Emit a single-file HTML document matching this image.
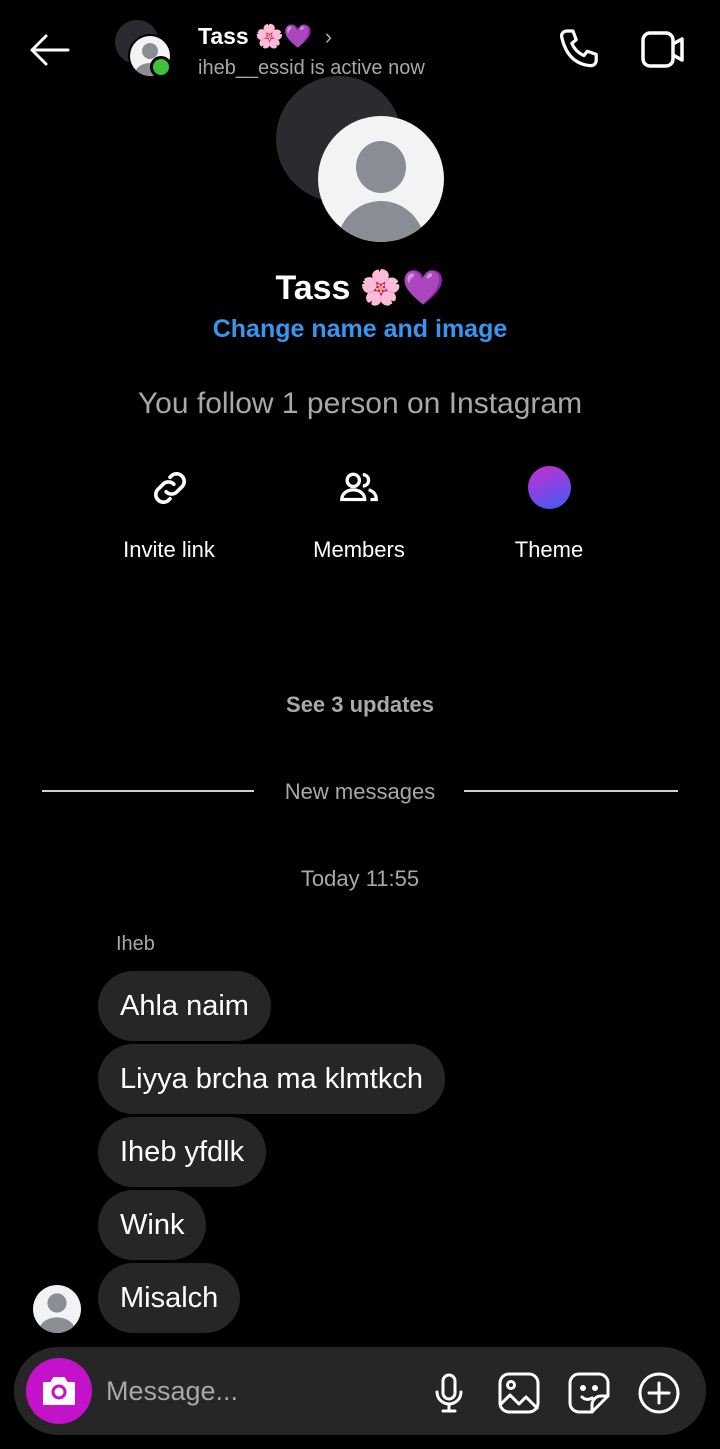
<!DOCTYPE html>
<html><head><meta charset="utf-8"><style>
body{margin:0;width:720px;height:1449px;background:#000;position:relative;overflow:hidden;font-family:"Liberation Sans","Noto Sans CJK JP",sans-serif;color:#fff}
.a{position:absolute}
.c{position:absolute;left:0;width:720px;text-align:center}
.b{position:absolute;left:98px;height:70px;background:#262626;border-radius:35px;font-size:29px;line-height:70px;padding:0 22px;box-sizing:border-box}
</style></head><body>
<svg class="a" style="left:28px;top:32px" width="44" height="36" viewBox="0 0 44 36"><path d="M40 18H4M18 4L4 18l14 14" stroke="#fff" stroke-width="3" fill="none" stroke-linecap="round" stroke-linejoin="round"/></svg>
<div class="a" style="left:115px;top:20px;width:44px;height:44px;border-radius:50%;background:#2a2b2e"></div>
<div class="a" style="left:128px;top:34px;width:44px;height:44px;border-radius:50%;background:#000"></div>
<svg class="a" style="left:130px;top:36px" width="40" height="40" viewBox="0 0 40 40"><defs><clipPath id="s"><circle cx="20" cy="20" r="20"/></clipPath></defs><circle cx="20" cy="20" r="20" fill="#f2f3f5"/><g clip-path="url(#s)" fill="#8a8d94"><circle cx="20" cy="15" r="8"/><ellipse cx="20" cy="38" rx="15" ry="11"/></g></svg>
<div class="a" style="left:150px;top:56px;width:22px;height:22px;border-radius:50%;background:#3ec23e;border:3px solid #000;box-sizing:border-box"></div>
<div class="a" style="left:198px;top:23px;font-size:23px;font-weight:bold">Tass 🌸💜 <span style="font-weight:normal;color:#aaa;font-size:22px;margin-left:6px">›</span></div>
<div class="a" style="left:198px;top:57px;font-size:20px;color:#a8a8a8">iheb__essid is active now</div>
<svg class="a" style="left:556px;top:26px" width="48" height="48" viewBox="0 0 24 24"><path d="M5.5 2.5h3l1.6 4.4-2.2 1.8c1.2 2.8 3.3 4.9 6 6.1l1.8-2.2 4.4 1.6v3c0 1.6-1.3 2.8-2.9 2.6C9.6 19.2 4.8 14.4 2.8 5.3 2.6 3.8 3.9 2.5 5.5 2.5z" stroke="#fff" stroke-width="1.6" fill="none" stroke-linejoin="round"/></svg>
<svg class="a" style="left:640px;top:30px" width="48" height="40" viewBox="0 0 48 40"><rect x="3" y="3" width="30" height="33" rx="7" stroke="#fff" stroke-width="3.5" fill="none"/><path d="M33 14l9-5v21l-9-5" stroke="#fff" stroke-width="3.5" fill="none" stroke-linejoin="round"/></svg>
<div class="a" style="left:276px;top:76px;width:126px;height:126px;border-radius:50%;background:#2a2b2e"></div>
<svg class="a" style="left:318px;top:116px" width="126" height="126" viewBox="0 0 126 126"><defs><clipPath id="b"><circle cx="63" cy="63" r="63"/></clipPath></defs><circle cx="63" cy="63" r="63" fill="#f2f3f5"/><g clip-path="url(#b)" fill="#8a8d94"><ellipse cx="63" cy="51" rx="25" ry="26"/><ellipse cx="63" cy="130" rx="44" ry="45"/></g></svg>
<div class="c" style="top:268px;font-size:34px;font-weight:bold">Tass 🌸💜</div>
<div class="c" style="top:315px;font-size:25px;font-weight:bold;color:#3797f0">Change name and image</div>
<div class="c" style="top:387px;font-size:30px;color:#a8a8a8">You follow 1 person on Instagram</div>
<svg class="a" style="left:147px;top:465px" width="46" height="46" viewBox="0 0 24 24" fill="none" stroke="#fff" stroke-width="1.9" stroke-linecap="round"><path d="M10 14a4 4 0 0 0 5.6 0l3-3a4 4 0 0 0-5.6-5.6l-1 1"/><path d="M14 10a4 4 0 0 0-5.6 0l-3 3a4 4 0 0 0 5.6 5.6l1-1"/></svg>
<svg class="a" style="left:336px;top:465px" width="46" height="46" viewBox="0 0 24 24" fill="none" stroke="#fff" stroke-width="1.7"><circle cx="9" cy="8" r="3.2"/><path d="M3 18c0-3 2.7-5 6-5s6 2 6 5z"/><path d="M14 5a3 3 0 0 1 0 6M17 13c2.3.5 4 2.2 4 5h-3"/></svg>
<div class="a" style="left:528px;top:466px;width:43px;height:43px;border-radius:50%;background:linear-gradient(160deg,#c92cd0,#3d5ef5)"></div>
<div class="a" style="left:69px;top:537px;width:200px;text-align:center;font-size:22px">Invite link</div>
<div class="a" style="left:259px;top:537px;width:200px;text-align:center;font-size:22px">Members</div>
<div class="a" style="left:449px;top:537px;width:200px;text-align:center;font-size:22px">Theme</div>
<div class="c" style="top:692px;font-size:22px;font-weight:bold;color:#a8a8a8">See 3 updates</div>
<div class="a" style="left:42px;top:790px;width:212px;height:2px;background:#cfcfcf"></div>
<div class="a" style="left:464px;top:790px;width:214px;height:2px;background:#cfcfcf"></div>
<div class="c" style="top:779px;font-size:22px;color:#a8a8a8">New messages</div>
<div class="c" style="top:866px;font-size:22px;color:#a8a8a8">Today 11:55</div>
<div class="a" style="left:116px;top:933px;font-size:20px;color:#a8a8a8">Iheb</div>
<div class="b" style="top:971px">Ahla naim</div>
<div class="b" style="top:1044px">Liyya brcha ma klmtkch</div>
<div class="b" style="top:1117px">Iheb yfdlk</div>
<div class="b" style="top:1190px">Wink</div>
<div class="b" style="top:1263px">Misalch</div>
<svg class="a" style="left:33px;top:1285px" width="48" height="48" viewBox="0 0 40 40"><defs><clipPath id="m"><circle cx="20" cy="20" r="20"/></clipPath></defs><circle cx="20" cy="20" r="20" fill="#f2f3f5"/><g clip-path="url(#m)" fill="#8a8d94"><circle cx="20" cy="15" r="8"/><ellipse cx="20" cy="38" rx="15" ry="11"/></g></svg>
<div class="a" style="left:14px;top:1347px;width:692px;height:88px;border-radius:44px;background:#262626"></div>
<div class="a" style="left:26px;top:1358px;width:66px;height:66px;border-radius:50%;background:#c312c9"></div>
<svg class="a" style="left:40px;top:1374px" width="38" height="34" viewBox="0 0 38 34"><path d="M4 9h7l3-5h10l3 5h7v21H4z" fill="#fff" stroke="#fff" stroke-width="2" stroke-linejoin="round"/><circle cx="19" cy="18" r="6" fill="none" stroke="#c312c9" stroke-width="3"/></svg>
<div class="a" style="left:106px;top:1376px;font-size:27px;color:#a8a8a8">Message...</div>
<svg class="a" style="left:432px;top:1372px" width="34" height="42" viewBox="0 0 34 42" fill="none" stroke="#fff" stroke-width="3" stroke-linecap="round"><rect x="11" y="3" width="12" height="24" rx="6"/><path d="M5 20a12 12 0 0 0 24 0M17 32v7M11 39h12"/></svg>
<svg class="a" style="left:497px;top:1371px" width="44" height="44" viewBox="0 0 44 44" fill="none" stroke="#fff" stroke-width="3" stroke-linejoin="round"><rect x="3" y="3" width="38" height="38" rx="9"/><circle cx="14" cy="14" r="3.5"/><path d="M3 34l10-10 9 9 7-7 12 12"/></svg>
<svg class="a" style="left:567px;top:1371px" width="44" height="44" viewBox="0 0 44 44" fill="none" stroke="#fff" stroke-width="3" stroke-linejoin="round" stroke-linecap="round"><path d="M25 41H12a9 9 0 0 1-9-9V12a9 9 0 0 1 9-9h20a9 9 0 0 1 9 9v13z"/><path d="M25 41v-7a9 9 0 0 1 9-9h7"/><circle cx="16" cy="17" r="1.5" fill="#fff"/><circle cx="28" cy="17" r="1.5" fill="#fff"/><path d="M15 26c3 3 7 3 10 1"/></svg>
<svg class="a" style="left:637px;top:1371px" width="44" height="44" viewBox="0 0 44 44" fill="none" stroke="#fff" stroke-width="3" stroke-linecap="round"><circle cx="22" cy="22" r="19"/><path d="M22 12v20M12 22h20"/></svg>
</body></html>
